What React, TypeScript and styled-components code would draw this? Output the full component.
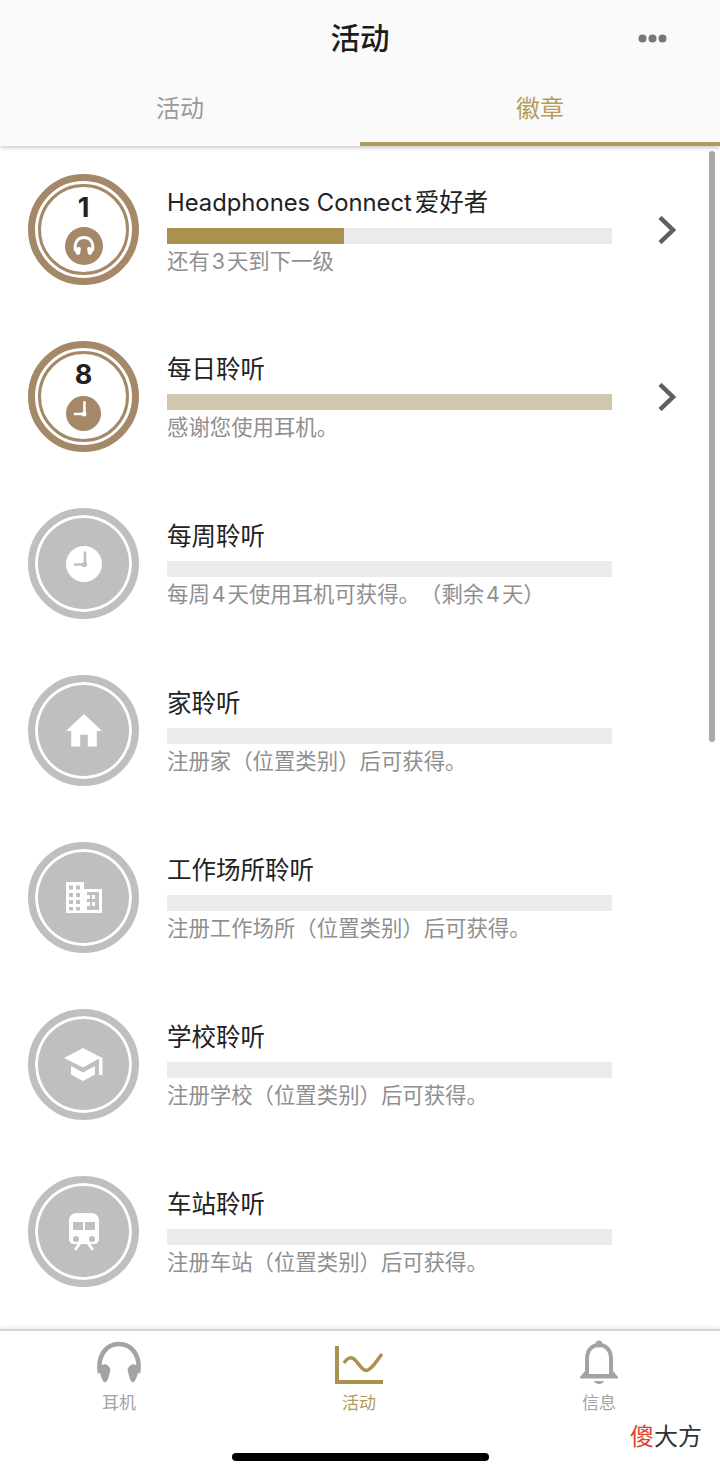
import React from 'react';
import styled, { createGlobalStyle } from 'styled-components';

const GOLD = '#ab9150';
const BROWN = '#a48867';
const GREY = '#bfbfbf';
const FONT = '"Inter", "Noto Sans CJK SC", sans-serif';

const GlobalStyle = createGlobalStyle`
  html, body {
    margin: 0;
    padding: 0;
    background: #fff;
    font-family: ${FONT};
    text-spacing-trim: space-all;
  }
`;

const Page = styled.div`
  position: relative;
  width: 720px;
  height: 1475px;
  display: flex;
  flex-direction: column;
  overflow: hidden;
  background: #fff;
`;

const Header = styled.header`
  position: relative;
  z-index: 2;
  flex: none;
  height: 146px;
  background: #fafafa;
  box-shadow: 0 2px 4px rgba(0, 0, 0, 0.2);
`;

const TitleBar = styled.div`
  height: 78px;
  box-sizing: border-box;
  padding-bottom: 2px;
  display: flex;
  align-items: center;
  justify-content: center;
`;

const Title = styled.h1`
  margin: 0;
  font-size: 29.5px;
  line-height: 40px;
  font-weight: 500;
  color: #1c1c1c;
`;

const MoreDots = styled.svg`
  position: absolute;
  left: 638px;
  top: 33px;
`;

const Tabs = styled.div`
  height: 68px;
  display: flex;
`;

const Tab = styled.div<{ $active?: boolean }>`
  flex: 1;
  display: flex;
  align-items: flex-start;
  justify-content: center;
  padding-top: 14px;
  box-sizing: border-box;
  font-size: 24px;
  line-height: 34px;
  color: ${p => (p.$active ? '#b69c5e' : '#9b9b9b')};
  border-bottom: 4px solid ${p => (p.$active ? '#b39a60' : 'transparent')};
`;

const List = styled.main`
  flex: 1;
  min-height: 0;
  overflow: hidden;
  display: flex;
  flex-direction: column;
`;

const Row = styled.div`
  flex: none;
  height: 167px;
  box-sizing: border-box;
  display: flex;
  align-items: center;
  padding-left: 28px;
`;

const Badge = styled.div<{ $earned?: boolean }>`
  flex: none;
  width: 111px;
  height: 111px;
  box-sizing: border-box;
  border-radius: 50%;
  border: 7px solid ${p => (p.$earned ? BROWN : GREY)};
  background: ${p => (p.$earned ? '#fff' : GREY)};
  box-shadow: inset 0 0 0 3px #fff;
  display: flex;
  align-items: center;
  justify-content: center;
`;

const BadgeInner = styled.div`
  width: 91px;
  height: 91px;
  box-sizing: border-box;
  border-radius: 50%;
  border: 3px solid ${BROWN};
  display: flex;
  flex-direction: column;
  align-items: center;
`;

const Level = styled.div`
  margin-top: 5px;
  height: 32px;
  font-size: 27px;
  line-height: 32px;
  font-weight: 700;
  color: #222;
`;

const MiniSlot = styled.div`
  height: 38px;
  margin-top: 3px;
  display: flex;
  align-items: center;
  justify-content: center;
`;

const RowBody = styled.div`
  width: 445px;
  margin-left: 28px;
  padding-top: 2px;
  display: flex;
  flex-direction: column;
`;

const RowTitle = styled.div`
  font-size: 24.5px;
  line-height: 34px;
  color: #222;
  white-space: nowrap;
`;

const LatinName = styled.span`
  font-size: 23.8px;
  margin-right: 3px;
`;

const Track = styled.div`
  height: 16px;
  margin-top: 8px;
  background: #ebebeb;
`;

const Fill = styled.div<{ $color: string }>`
  height: 100%;
  background: ${p => p.$color};
`;

const RowNote = styled.div`
  margin-top: 1px;
  font-size: 21.4px;
  line-height: 32px;
  color: #8f8f8f;
  white-space: nowrap;
`;

const Chevron = styled.svg`
  flex: none;
  margin-left: 46px;
`;

const ScrollThumb = styled.div`
  position: absolute;
  left: 709px;
  top: 151px;
  width: 6px;
  height: 591px;
  border-radius: 3px;
  background: #a8a8a8;
`;

const NavBar = styled.nav`
  position: relative;
  z-index: 2;
  flex: none;
  height: 146px;
  box-sizing: border-box;
  display: flex;
  background: #fff;
  border-top: 2px solid #d4d4d4;
  box-shadow: 0 -2px 3px rgba(0, 0, 0, 0.07);
`;

const NavItem = styled.div<{ $active?: boolean }>`
  flex: 1;
  height: 84px;
  padding-right: 2px;
  display: flex;
  flex-direction: column;
  align-items: center;
  justify-content: flex-end;
  font-size: 17px;
  line-height: 24px;
  color: ${p => (p.$active ? '#b09a62' : '#a3a3a3')};
`;

const NavIcon = styled.svg`
  display: block;
  margin-bottom: 6px;
`;

const HomeBar = styled.div`
  position: absolute;
  left: 232px;
  top: 1453px;
  z-index: 3;
  width: 257px;
  height: 8px;
  border-radius: 4px;
  background: #000;
`;

const Watermark = styled.div`
  position: absolute;
  left: 630px;
  top: 1420px;
  z-index: 3;
  font-size: 24px;
  line-height: 34px;
  color: #333;
  white-space: nowrap;
`;

const WatermarkRed = styled.span`
  color: #e0432c;
`;

const ClockGlyph = ({ size, bg, fg }: { size: number; bg: string; fg: string }) => (
  <svg width={size} height={size} viewBox="0 0 36 36">
    <circle cx="18" cy="18" r="18" fill={bg} />
    <path d="M19 5.500v13M19 18.500H8" stroke={fg} strokeWidth="2.600" fill="none" />
    <circle cx="18.500" cy="18.500" r="2.600" fill={fg} />
  </svg>
);

const MiniHeadset = () => (
  <svg width="38" height="38" viewBox="0 0 38 38">
    <circle cx="19" cy="19" r="19" fill={BROWN} />
    <path d="M10.500 24C9 15 13 10.500 19 10.500S29 15 27.500 24" fill="none" stroke="#fff" strokeWidth="3" />
    <path d="M9.500 21l4.500-1c1.500 0 2 1 1.800 2.500l-.6 3.500c-.3 1.500-2 2.500-3.400 1.500-1-1-2.100-3.500-2.300-6.500zM28.500 21l-4.500-1c-1.500 0-2 1-1.800 2.500l.6 3.500c.3 1.500 2 2.500 3.400 1.500 1-1 2.100-3.500 2.300-6.500z" fill="#fff" />
  </svg>
);

const HomeIcon = () => (
  <svg width="36" height="33" viewBox="0 0 38 34" preserveAspectRatio="none">
    <path d="M19 0L38 17.500H32.500V33.500H23V21.500H15V33.500H5.500V17.500H0z" fill="#fff" />
  </svg>
);

const OfficeIcon = () => (
  <svg width="36" height="31" viewBox="0 0 36 31">
    <path
      fillRule="evenodd"
      fill="#fff"
      d="M0 0H18V7H36V31H0zM3 3.500v4h4v-4zM10 3.500v4h4v-4zM3 11v4h4v-4zM10 11v4h4v-4zM3 18v4h4v-4zM10 18v4h4v-4zM3 25v3.500h4V25zM10 25v3.500h4V25zM21 10v3h3v4h-3v3h3v4h-3v4h12V10zM26 13h3v4h-3zM26 20h3v4h-3z"
    />
  </svg>
);

const CapIcon = () => (
  <svg width="40" height="33" viewBox="0 0 40 33">
    <path d="M19 0L37 9.500 19 19.500 0 10z" fill="#fff" />
    <path d="M7 18l12 6.500L31 18v8.500L19 33 7 26.500z" fill="#fff" />
    <path d="M35 9.500h3.500V27H35z" fill="#fff" />
  </svg>
);

const TrainIcon = () => (
  <svg width="30" height="38" viewBox="0 0 30 38">
    <path
      fillRule="evenodd"
      fill="#fff"
      d="M8 0H22C27 0 30 3 30 8V26C30 29 28 31 25 31H5C2 31 0 29 0 26V8C0 3 3 0 8 0zM4 9v8h10V9zM16 9v8h10V9zM7 23a3 3 0 1 0 0 6a3 3 0 1 0 0-6zM23 23a3 3 0 1 0 0 6a3 3 0 1 0 0-6z"
    />
    <path d="M11 30L6 37M19 30l5 7" fill="none" stroke="#fff" strokeWidth="3" />
  </svg>
);

const ChevronIcon = () => (
  <Chevron width="18" height="28" viewBox="0 0 18 28">
    <path d="M2 1.500l13 12.500L2 26.500" fill="none" stroke="#5f5f5f" strokeWidth="4.500" />
  </Chevron>
);

const badges = [
  {
    key: 'connect',
    title: (
      <>
        <LatinName>Headphones Connect</LatinName>爱好者
      </>
    ),
    note: '还有\u200a3\u200a天到下一级',
    level: '1',
    fill: 39.8,
    color: GOLD,
    mini: <MiniHeadset />,
  },
  {
    key: 'daily',
    title: '每日聆听',
    note: '感谢您使用耳机。',
    level: '8',
    fill: 100,
    color: '#d1c7ae',
    mini: <ClockGlyph size={35} bg={BROWN} fg="#fff" />,
  },
  { key: 'weekly', title: '每周聆听', note: '每周\u200a4\u200a天使用耳机可获得。（剩余\u200a4\u200a天）', icon: <ClockGlyph size={36} bg="#fff" fg={GREY} /> },
  { key: 'home', title: '家聆听', note: '注册家（位置类别）后可获得。', icon: <HomeIcon /> },
  { key: 'work', title: '工作场所聆听', note: '注册工作场所（位置类别）后可获得。', icon: <OfficeIcon /> },
  { key: 'school', title: '学校聆听', note: '注册学校（位置类别）后可获得。', icon: <CapIcon /> },
  { key: 'station', title: '车站聆听', note: '注册车站（位置类别）后可获得。', icon: <TrainIcon /> },
];

const App = () => {
  return (
    <Page>
      <GlobalStyle />
      <Header>
        <TitleBar>
          <Title>活动</Title>
          <MoreDots width="29" height="11" viewBox="0 0 29 11">
            <circle cx="4.500" cy="5.500" r="4" fill="#777" />
            <circle cx="14.500" cy="5.500" r="4" fill="#777" />
            <circle cx="24.500" cy="5.500" r="4" fill="#777" />
          </MoreDots>
        </TitleBar>
        <Tabs>
          <Tab>活动</Tab>
          <Tab $active>徽章</Tab>
        </Tabs>
      </Header>
      <List>
        {badges.map(b => (
          <Row key={b.key}>
            <Badge $earned={!!b.level}>
              {b.level ? (
                <BadgeInner>
                  <Level>{b.level}</Level>
                  <MiniSlot>{b.mini}</MiniSlot>
                </BadgeInner>
              ) : (
                b.icon
              )}
            </Badge>
            <RowBody>
              <RowTitle>{b.title}</RowTitle>
              <Track>{b.fill ? <Fill $color={b.color!} style={{ width: `${b.fill}%` }} /> : null}</Track>
              <RowNote>{b.note}</RowNote>
            </RowBody>
            {b.level ? <ChevronIcon /> : null}
          </Row>
        ))}
      </List>
      <ScrollThumb />
      <NavBar>
        <NavItem>
          <NavIcon width="46" height="44" viewBox="0 0 46 44">
            <path d="M4 32C1 15 10 3 23 3S45 15 42 32" fill="none" stroke="#a3a3a3" strokeWidth="4.500" />
            <path d="M3 25L9 23C12 24 14 26 14.500 29L12 38C11 41 9 42 7.500 40.500 5 37 3.500 31 3 25zM43 25L37 23C34 24 32 26 31.500 29L34 38C35 41 37 42 38.500 40.500 41 37 42.500 31 43 25z" fill="#a3a3a3" />
          </NavIcon>
          耳机
        </NavItem>
        <NavItem $active>
          <NavIcon width="48" height="39" viewBox="0 0 48 39">
            <path d="M2 0V36H48" fill="none" stroke="#ab9150" strokeWidth="4" />
            <path d="M9 17C13 11 17 10 21 15C26 21 29 26 33 24C38 22 42 14 47 8" fill="none" stroke="#ab9150" strokeWidth="3.500" />
          </NavIcon>
          活动
        </NavItem>
        <NavItem>
          <NavIcon width="38" height="45" viewBox="0 0 38 45">
            <circle cx="19" cy="4" r="3.500" fill="#a3a3a3" />
            <path d="M7 35V19C7 10 12 5 19 5s12 5 12 14v16" fill="none" stroke="#a3a3a3" strokeWidth="4" />
            <path d="M5 31L0 37v1.500H38V37l-5-6z" fill="#a3a3a3" />
            <path d="M14 41h10c-1 4-9 4-10 0z" fill="#a3a3a3" />
            <path d="M9 27h20v7H9z" fill="#fff" />
          </NavIcon>
          信息
        </NavItem>
      </NavBar>
      <Watermark>
        <WatermarkRed>傻</WatermarkRed>大方
      </Watermark>
      <HomeBar />
    </Page>
  );
};

export default App;
